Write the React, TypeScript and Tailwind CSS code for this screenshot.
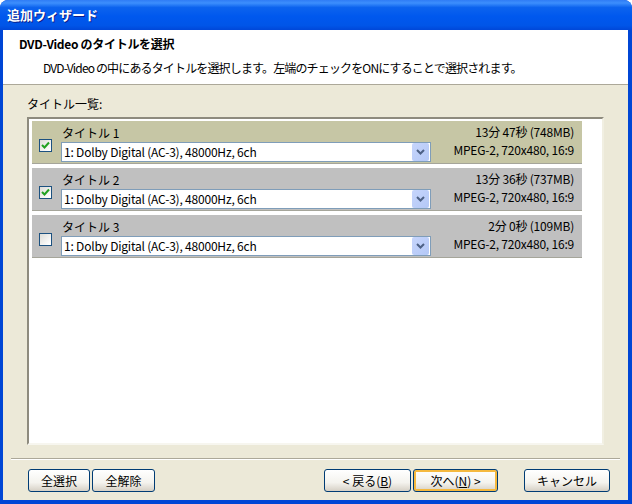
import React from "react";

const font = "font-['Noto_Sans_CJK_JP','Noto_Sans',sans-serif]";

const titles = [
  { name: "タイトル 1", time: "13分 47秒 (748MB)", checked: true, selected: true },
  { name: "タイトル 2", time: "13分 36秒 (737MB)", checked: true, selected: false },
  { name: "タイトル 3", time: "2分 0秒 (109MB)", checked: false, selected: false },
];

function Checkbox({ checked }: { checked: boolean }) {
  return (
    <div className="w-[13px] h-[13px] border border-[#1c5180] bg-[linear-gradient(135deg,#dcdcd7_0%,#ffffff_90%)] flex items-center justify-center">
      {checked && (
        <svg width="9" height="9" viewBox="0 0 9 9">
          <path d="M1 4 L3.5 6.5 L8 1.5" stroke="#21a121" strokeWidth="2" fill="none" />
        </svg>
      )}
    </div>
  );
}

function Dropdown() {
  return (
    <div className="w-[370px] h-[20px] border border-[#7f9db9] bg-white flex items-center">
      <span className="flex-1 pl-[2px] text-[12px] leading-none tracking-[-0.2px]">1: Dolby Digital (AC-3), 48000Hz, 6ch</span>
      <div className="w-[17px] h-[18px] mr-px bg-[linear-gradient(135deg,#c6d5fc_0%,#b4c8f6_100%)] rounded-[2px] flex items-center justify-center">
        <svg width="9" height="6" viewBox="0 0 9 6">
          <path d="M1 1 L4.5 4.5 L8 1" stroke="#4d6185" strokeWidth="2" fill="none" />
        </svg>
      </div>
    </div>
  );
}

function Btn({ children, w, def }: { children: React.ReactNode; w: string; def?: boolean }) {
  return (
    <button
      className={`${w} h-[23px] rounded-[3px] border border-[#003c74] text-[12px] leading-none text-black bg-[linear-gradient(to_bottom,#ffffff_0%,#f4f3ee_60%,#d6d0c5_100%)] ${
        def ? "shadow-[inset_0_0_0_2px_#f5b93f]" : ""
      }`}
    >
      {children}
    </button>
  );
}

export default function App() {
  return (
    <div className={`w-[632px] h-[504px] bg-[#0046d5] rounded-t-[8px] flex flex-col ${font}`}>
      {/* title bar */}
      <div className="h-[30px] rounded-t-[8px] bg-[linear-gradient(to_bottom,#2f7cf5_0%,#3d8ffd_10%,#0c63ee_25%,#0058ee_55%,#0055e8_85%,#0047d8_100%)] flex items-center pl-[7px]">
        <span className="text-white font-bold text-[13px] [text-shadow:1px_1px_0_#0a1e8c]">追加ウィザード</span>
      </div>

      <div className="flex-1 ml-[3px] mr-[4px] mb-[4px] bg-[#ece9d8] flex flex-col">
        {/* header */}
        <div className="h-[55px] bg-white border-b border-[#aca899] pl-[16px] pt-[5px]">
          <div className="text-[12px] font-bold leading-[18px] tracking-[-0.3px]">DVD-Video のタイトルを選択</div>
          <div className="text-[12px] leading-[18px] mt-[6px] pl-[24px] tracking-[-0.85px]">
            DVD-Video の中にあるタイトルを選択します。左端のチェックをONにすることで選択されます。
          </div>
        </div>

        {/* body */}
        <div className="flex-1 flex flex-col px-[24px]">
          <div className="text-[12px] leading-none mt-[13px] h-[19px]">タイトル一覧:</div>
          <div className="h-[328px] border-t-2 border-l-2 border-t-[#8e8b7e] border-l-[#8e8b7e] border-r-2 border-b-2 border-r-[#f1efe2] border-b-[#f7f6ef] bg-white p-[3px] pr-[20px] pt-[2px] flex flex-col gap-[4px]">
            {titles.map((t) => (
              <div
                key={t.name}
                className={`h-[43px] border-b border-[#a5a59a] flex items-center ${
                  t.selected ? "bg-[#c6c6a5]" : "bg-[#c0c0c0]"
                }`}
              >
                <div className="w-[29px] pl-[7px] pt-[6px]">
                  <Checkbox checked={t.checked} />
                </div>
                <div className="flex flex-col">
                  <div className="text-[12px] leading-none h-[19px] pt-[4px] pl-px">{t.name}</div>
                  <Dropdown />
                </div>
                <div className="flex-1 flex flex-col items-end pr-[8px] text-[12px] leading-none tracking-[-0.2px]">
                  <div className="h-[18px] pt-[2px]">{t.time}</div>
                  <div className="h-[18px] pt-[2px]">MPEG-2, 720x480, 16:9</div>
                </div>
              </div>
            ))}
          </div>
        </div>

        {/* footer */}
        <div className="mx-[8px] border-t border-[#aca899] shadow-[0_1px_0_#ffffff] mt-[13px]" />
        <div className="h-[41px] flex items-center pl-[25px] pr-[18px] pb-[8px] pt-[10px]">
          <div className="flex gap-[2px]">
            <Btn w="w-[62px]">全選択</Btn>
            <Btn w="w-[63px]">全解除</Btn>
          </div>
          <div className="flex-1" />
          <div className="flex gap-[2px]">
            <Btn w="w-[87px]">
              &lt; 戻る(<span className="underline">B</span>)
            </Btn>
            <Btn w="w-[85px]" def>
              次へ(<span className="underline">N</span>) &gt;
            </Btn>
          </div>
          <div className="w-[26px]" />
          <Btn w="w-[86px]">キャンセル</Btn>
        </div>
      </div>
    </div>
  );
}
